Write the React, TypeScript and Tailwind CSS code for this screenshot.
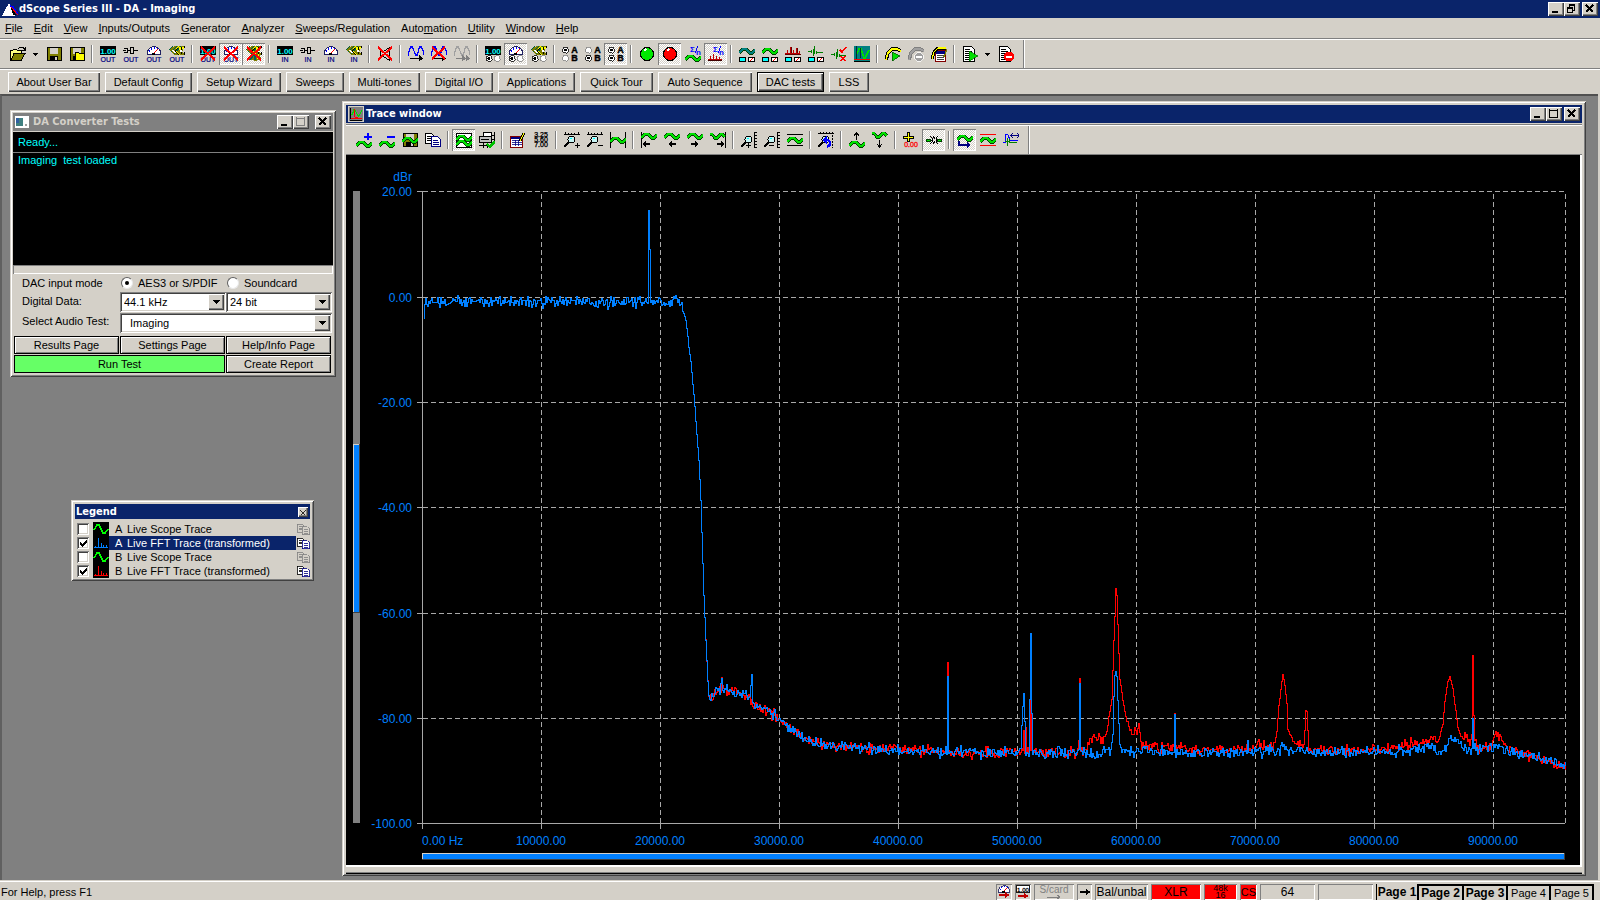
import { useState, type ReactNode } from "react";

const SANS = "font-['Liberation_Sans',Arial,sans-serif]";
const TITLE = "font-['DejaVu_Sans_Condensed','Noto_Sans',sans-serif]";

const RAISED =
  "bg-[#d4d0c8] shadow-[inset_1px_1px_#ffffff,inset_-1px_-1px_#404040,inset_-2px_-2px_#808080]";
const WINDOW =
  "bg-[#d4d0c8] shadow-[inset_1px_1px_#d4d0c8,inset_-1px_-1px_#404040,inset_2px_2px_#ffffff,inset_-2px_-2px_#808080]";
const FIELD =
  "bg-white shadow-[inset_1px_1px_#808080,inset_-1px_-1px_#ffffff,inset_2px_2px_#404040,inset_-2px_-2px_#d4d0c8]";
const SUNKEN = "shadow-[inset_1px_1px_#808080,inset_-1px_-1px_#ffffff]";

/* ---------- icon pieces, all drawn on a 16 x 16 grid ---------- */

function Icon({ children, className = "size-4" }: { children: ReactNode; className?: string }) {
  return (
    <svg viewBox="0 0 16 16" className={className} fill="none" shapeRendering="crispEdges" aria-hidden="true">
      {children}
    </svg>
  );
}

const Led = () => (
  <>
    <rect width="16" height="9" fill="#000" />
    <text x="8" y="8" textAnchor="middle" fontSize="8" fontWeight="bold" fill="#00ffff" fontFamily="Liberation Sans, sans-serif">1.00</text>
  </>
);
const Tag = ({ t }: { t: string }) => (
  <text x="8" y="16" textAnchor="middle" fontSize="7" fill="#000080" fontFamily="Liberation Sans, sans-serif" stroke="#000080" strokeWidth="0.2">{t}</text>
);
const Jack = () => (
  <>
    <path d="M1 2.500h4M1 6.500h4M0 4.500h3M4.500 2v5M11 4.500h4M5 4.500h2" stroke="#000" />
    <rect x="7.500" y="1.500" width="3" height="6" stroke="#000" fill="#d4d0c8" />
  </>
);
const Meter = () => (
  <>
    <path d="M1.500 8.500V5L4 2l2.500-1.500h3L12 2l2.500 3v3.500z" fill="#fff" stroke="#202060" />
    <path d="M3 5h1M5 3h1M8 2h1M11 3h1" stroke="#0000ff" strokeWidth="1.400" />
    <path d="M7 8l5-5" stroke="#ff0000" strokeWidth="1.300" />
    <path d="M6 8h3" stroke="#000" strokeWidth="2" />
  </>
);
const Fish = () => (
  <>
    <path d="M0 4l3-3 3-1h9v2h-2l1 2-1 2 2 1v2H6z" fill="#808000" />
    <path d="M0 4l4-4M2 6l6-6M5 8l7-8" stroke="#006040" strokeWidth="1.300" />
    <path d="M7 3l3-3M7 5l4 4M11 1v3M14 1v2" stroke="#ffff00" strokeWidth="1.300" />
    <path d="M12.500 1v7M9 2l-3 3 4 4M15 0v2M15 6v3" stroke="#000" />
    <path d="M3 4l4 3M11 5h2" stroke="#fff" strokeWidth="1.200" />
  </>
);
const Cross = ({ s = 14 }: { s?: number }) => (
  <path d={`M1 1l${s} ${s - 1}M${s + 1} 1L1 ${s}`} stroke="#ff0000" strokeWidth="2" />
);
const Dot = ({ x, y, on }: { x: number; y: number; on: boolean }) => (
  <>
    <circle cx={x} cy={y} r="3" fill="#fff" stroke={on ? "#000" : "#808080"} strokeWidth="0.8" />
    {on && <circle cx={x} cy={y} r="1.500" fill="#000" />}
  </>
);
const Radios = () => (
  <>
    <Dot x={4} y={12.5} on />
    <Dot x={12} y={12.5} on={false} />
  </>
);
const AB = ({ a, b }: { a: boolean; b: boolean }) => (
  <>
    <Dot x={3.5} y={4} on={a} />
    <Dot x={3.5} y={12} on={b} />
    <text x="12.500" y="7" textAnchor="middle" fontSize="9" fontWeight="bold" fill="#000" stroke="#000" strokeWidth="0.4" fontFamily="Liberation Sans, sans-serif">A</text>
    <text x="12.500" y="15" textAnchor="middle" fontSize="9" fontWeight="bold" fill="#000" stroke="#000" strokeWidth="0.4" fontFamily="Liberation Sans, sans-serif">B</text>
  </>
);
const Wave = ({ y = 8, c = "#00e000", flip = false }: { y?: number; c?: string; flip?: boolean }) => {
  const d = flip
    ? `M0 ${y - 3}h2l3 4h2l4-4h1l3 3`
    : `M0 ${y + 3}l4-4h3l4 4h2l3-3`;
  return (
    <>
      <path d={d} stroke="#004000" strokeWidth="3" />
      <path d={d} stroke={c} strokeWidth="1.600" />
    </>
  );
};
const Sine = ({ c }: { c: string }) => (
  <path d="M0.500 10V7l2-6h2l3 8h2l2-8h2l2 5v3" stroke={c} strokeWidth="1.200" />
);
const Arrow = ({ x, y, dir, c = "#000" }: { x: number; y: number; dir: 1 | -1; c?: string }) => (
  <path d={`M${x} ${y}h${7 * dir}m${-3 * dir} -2.500l${3 * dir} 2.500l${-3 * dir} 2.500`} stroke={c} strokeWidth="1.200" />
);
const Panels = () => (
  <>
    <rect x="0.500" y="11.500" width="6" height="4" fill="#00ffff" stroke="#000" />
    <rect x="9.500" y="11.500" width="6" height="4" fill="#fff" stroke="#000" />
    <path d="M11 15l3-3" stroke="#ff0000" />
  </>
);
const Bars = () => (
  <>
    <path d="M0 9V7h2V4h1v3h2V1h1v6h2V4h1v3h2V2h1v5h2V5h1v4z" fill="#c00000" />
    <path d="M0 8.500h16M6.500 1v6M12.500 2v5" stroke="#600000" />
  </>
);
const SigmaN = () => (
  <>
    <text x="5" y="6" fontSize="8" fontWeight="bold" fill="#0000ff" fontFamily="Liberation Sans, sans-serif">Σ</text>
    <text x="11" y="9" fontSize="8" fontWeight="bold" fill="#0000ff" fontFamily="Liberation Sans, sans-serif">n</text>
    <path d="M10 7l3-7" stroke="#0000ff" />
  </>
);
const Floppy = () => (
  <>
    <path d="M1 1.500h14v13H2l-1-1z" fill="#808000" stroke="#000" />
    <rect x="4" y="2" width="8" height="6" fill="#d4d0c8" />
    <rect x="4" y="10" width="8" height="5" fill="#000" />
    <rect x="9" y="11" width="2" height="3" fill="#d4d0c8" />
  </>
);
const Lens = () => (
  <>
    <circle cx="7.500" cy="7.500" r="3.500" fill="#c8f4f4" stroke="#000" />
    <path d="M5 10l-5 5" stroke="#000" strokeWidth="2" />
    <path d="M6 6h2" stroke="#00ffff" />
  </>
);
const TopRuler = () => <path d="M0 2.500h16M1.500 0v3M4.500 1v2M7.500 1v2M10.500 1v2M14.500 0v3" stroke="#000" />;
const SideRuler = () => <path d="M13.500 0v16M14 0.500h3M14 3.500h2M14 6.500h2M14 9.500h2M14 12.500h2M14 15.500h3" stroke="#000" />;
const Copy = ({ c = "#000", c2 = "#000080", f = "#fff" }: { c?: string; c2?: string; f?: string }) => (
  <>
    <path d="M0.500 1.500h6l2 2v8h-8z" fill={f} stroke={c} />
    <path d="M2 4.500h4M2 6.500h4M2 8.500h4" stroke={c} />
    <path d="M6.500 4.500h6l3 3v7h-9z" fill={f} stroke={c2} />
    <path d="M8 8.500h5M8 10.500h6M8 12.500h6" stroke={c2} />
  </>
);
const Page = () => (
  <>
    <path d="M1.500 0.500h8l3 3v12h-11z" fill="#fff" stroke="#000" />
    <path d="M3 3.500h5M3 5.500h7M3 7.500h7M3 9.500h7M3 11.500h7M3 13.500h6" stroke="#000" />
  </>
);
const Curve = ({ c = "#ffff00", d = "#000" }: { c?: string; d?: string }) => (
  <>
    <path d="M1 14l2-7 4-4h5l4 2" stroke={d} strokeWidth="3.500" />
    <path d="M1 14l2-7 4-4h5l4 2" stroke={c} strokeWidth="1.500" />
  </>
);
const Impulse = () => <path d="M0 5.500h3M3.500 4v3M5.500 3v7M6.500 0v8M8.500 5v3M9 6.500h6" stroke="#008000" />;

/* ---------- toolbar ---------- */

type Tool = { n: string; i: ReactNode; on?: boolean } | "sep" | "drop";

function Toolbar({ tools, label }: { tools: Tool[]; label: string }) {
  return (
    <div role="toolbar" aria-label={label} className="flex h-7 items-stretch">
      <div className="flex items-center border-r border-[#808080] pr-1.5 pl-1.5 shadow-[1px_0_#ffffff]">
        {tools.map((t, k) =>
          t === "sep" ? (
            <span key={k} className="mx-[3px] h-[18px] w-0.5 border-r border-l border-r-white border-l-[#808080]" />
          ) : t === "drop" ? (
            <button key={k} aria-label="More options" className="flex h-[22px] w-[13px] items-center justify-center">
              <svg viewBox="0 0 5 3" className="h-[3px] w-[5px]" shapeRendering="crispEdges" aria-hidden="true">
                <path d="M0 0h5L2.500 3z" />
              </svg>
            </button>
          ) : (
            <button
              key={k}
              title={t.n}
              aria-label={t.n}
              aria-pressed={!!t.on}
              className={
                t.on
                  ? `flex h-[22px] w-[23px] items-center justify-center bg-[repeating-conic-gradient(#ffffff_0_25%,#d4d0c8_0_50%)] bg-[length:2px_2px] ${SUNKEN}`
                  : "flex h-[22px] w-[23px] items-center justify-center"
              }
            >
              <Icon>{t.i}</Icon>
            </button>
          ),
        )}
      </div>
    </div>
  );
}

const MAIN_TOOLS: Tool[] = [
  {
    n: "Open",
    i: (
      <>
        <path d="M0.500 14V4.500h2l1-1h3l1 1h4V7" fill="#ffff80" stroke="#000" />
        <path d="M1 14.500l3-7h11l-4 7z" fill="#808000" stroke="#000" />
        <path d="M8 2.500l2-1h3l2 2M12 4h3V1" stroke="#000" />
      </>
    ),
  },
  "drop",
  { n: "Save", i: <Floppy /> },
  {
    n: "Save as",
    i: (
      <>
        <Floppy />
        <path d="M6.500 14.500v-8h3l1 1h5v7z" fill="#ffff00" stroke="#000" />
      </>
    ),
  },
  "sep",
  { n: "Digital output", i: <><Led /><Tag t="OUT" /></> },
  { n: "Analogue output", i: <><Jack /><Tag t="OUT" /></> },
  { n: "Output meter", i: <><Meter /><Tag t="OUT" /></> },
  { n: "Output carrier", i: <><Fish /><Tag t="OUT" /></> },
  "sep",
  { n: "Mute digital output", i: <><Led /><Tag t="OUT" /><Cross /></> },
  { n: "Mute analogue output", i: <><Meter /><Tag t="OUT" /><Cross /></>, on: true },
  { n: "Mute carrier", i: <><Fish /><path d="M1 13l4-5h9l1 5-5 2z" fill="#808000" /><path d="M4 14l4-6M9 14V8" stroke="#006060" strokeWidth="1.500" /><path d="M11 13l2-5" stroke="#ffff00" /><Cross /></>, on: true },
  "sep",
  { n: "Digital input", i: <><Led /><Tag t="IN" /></> },
  { n: "Analogue input", i: <><Jack /><Tag t="IN" /></> },
  { n: "Input meter", i: <><Meter /><Tag t="IN" /></> },
  { n: "Input carrier", i: <><Fish /><Tag t="IN" /></> },
  "sep",
  { n: "Mute speaker", i: <><path d="M3.500 5.500h3l6-4v13l-6-4h-3z" fill="#d4d0c8" stroke="#000" /><Cross /></> },
  "sep",
  { n: "Generator", i: <><Sine c="#0000ff" /><path d="M2 12.500h10" stroke="#000" strokeWidth="1.500" /><path d="M11 9l4 3.500-4 3z" fill="#000" /></> },
  { n: "Generator off", i: <><Sine c="#0000ff" /><path d="M2 12.500h10" stroke="#000" strokeWidth="1.500" /><path d="M11 9l4 3.500-4 3z" fill="#000" /><Cross s={13} /></> },
  { n: "Generator restart", i: <><Sine c="#a0a0a0" /><path d="M2 12.500h10" stroke="#808080" strokeWidth="1.500" /><path d="M8 9l4 3.500-4 3zM12 9l4 3.500-4 3z" fill="#808080" /></> },
  "sep",
  { n: "Reading source", i: <><Led /><Radios /></> },
  { n: "Meter source", i: <><Meter /><Radios /></>, on: true },
  { n: "Carrier source", i: <><Fish /><Radios /></> },
  "sep",
  { n: "Channel A", i: <AB a b={false} /> },
  { n: "Channel B", i: <AB a={false} b /> },
  { n: "Channels A and B", i: <AB a b />, on: true },
  "sep",
  { n: "Run", i: <><circle cx="8" cy="8" r="6.500" fill="#00e800" stroke="#000" /><path d="M5 5l2-2" stroke="#fff" strokeWidth="1.500" /></> },
  { n: "Stop", i: <><circle cx="8" cy="8" r="6.500" fill="#ff0000" stroke="#000" /><path d="M5 5l2-2" stroke="#fff" strokeWidth="1.500" /></>, on: true },
  { n: "Averaged scope", i: <><SigmaN /><Wave y={11} /></> },
  { n: "Averaged spectrum", i: <><SigmaN /><path d="M0 15v-2h2v-3h1v3h2V8h1v5h2v-3h1v3h2v-2h1v2h2v2z" fill="#c00000" /><path d="M0 14.500h14" stroke="#400000" /></>, on: true },
  "sep",
  { n: "Scope A", i: <><Wave y={4} c="#008080" /><Panels /></> },
  { n: "Scope B", i: <><Wave y={4} /><Panels /></> },
  { n: "Spectrum", i: <><Bars /><Panels /></> },
  { n: "Impulse", i: <><Impulse /><Panels /></> },
  { n: "Trace test", i: <><g transform="translate(0 3)"><Impulse /></g><path d="M9 4l2 2 4-5M10 10l4 5M14 10l-4 5" stroke="#ff0000" strokeWidth="1.500" /></> },
  { n: "Trace window", i: <><rect width="16" height="16" fill="#008080" /><path d="M3 8l2-5h2l3 9h1l4-8" stroke="#00e000" strokeWidth="1.500" /><path d="M2.500 0v14M6.500 2v10" stroke="#003030" /><path d="M0 13.500h16" stroke="#ff0000" /><path d="M0 15.500h16" stroke="#000" /></> },
  "sep",
  { n: "Sweep", i: <><Curve /><path d="M7 6l8 4-8 5z" fill="#00e000" stroke="#006000" strokeWidth="0.800" /></> },
  { n: "Stop sweep", i: <><Curve c="#a0a0a0" d="#808080" /><circle cx="11" cy="11" r="4.500" fill="#a0a0a0" stroke="#fff" strokeWidth="0.800" /><path d="M8 11h6" stroke="#fff" strokeWidth="1.500" /></> },
  { n: "Sweep settings", i: <><rect x="4.500" y="4.500" width="10" height="11" fill="#fff" stroke="#800000" /><path d="M5 6h9" stroke="#000080" strokeWidth="3" /><path d="M6 9.500h7M6 11.500h7M6 13.500h7" stroke="#404040" /><path d="M1 13l2-7 4-4h8" stroke="#000" strokeWidth="3" /><path d="M1 13l2-7 4-4h8" stroke="#ffff00" strokeWidth="1.200" /><path d="M13 11l3-8" stroke="#808000" strokeWidth="1.500" /></> },
  "sep",
  { n: "Run script", i: <><Page /><path d="M7 5l9 5-9 5z" fill="#00e000" stroke="#008000" strokeWidth="0.800" /></> },
  "drop",
  { n: "Stop script", i: <><Page /><circle cx="11" cy="10.500" r="5" fill="#ff0000" /><path d="M8 10.500h6" stroke="#fff" strokeWidth="2" /></> },
];

const TRACE_TOOLS: Tool[] = [
  { n: "Add trace", i: <><Wave y={11} /><path d="M8 4.500h8M12 1v7" stroke="#0000ff" strokeWidth="2" /></> },
  { n: "Remove trace", i: <><Wave y={11} /><path d="M8 4.500h8" stroke="#0000ff" strokeWidth="2" /></> },
  { n: "Save trace", i: <><Floppy /><Wave y={7} /></> },
  { n: "Copy", i: <Copy /> },
  "sep",
  { n: "Show traces", i: <><rect x="0.500" y="1.500" width="15" height="14" fill="#fff" stroke="#000" /><Wave y={5} /><Wave y={10} /></>, on: true },
  { n: "Print", i: <><rect x="4.500" y="0.500" width="8" height="4" fill="#fff" stroke="#000" /><rect x="0.500" y="4.500" width="12" height="6" fill="#c0c0c0" stroke="#000" /><path d="M2 7.500h8M0 13.500h8M4.500 11v5M8.500 11v5M15.500 0v10M13 3.500h3M13 7.500h3" stroke="#000" /><path d="M8 12l3 3 5-6" stroke="#00c000" strokeWidth="2.500" /></> },
  "sep",
  { n: "Edit trace data", i: <><rect x="0.500" y="4.500" width="12" height="11" fill="#fff" stroke="#800000" /><path d="M1 6h11" stroke="#000080" strokeWidth="2" /><path d="M2 8.500h10M2 10.500h10M2 12.500h10M5.500 8v6M8.500 8v6" stroke="#000080" strokeWidth="0.800" /><path d="M10 9l4-8" stroke="#000" strokeWidth="3" /><path d="M10 9l4-8" stroke="#ffff00" strokeWidth="1.200" /></> },
  { n: "Readings", i: <g fontFamily="Liberation Sans, sans-serif" fontSize="7" fill="#000" stroke="#000" strokeWidth="0.300" textAnchor="middle"><text x="8" y="5">3.25</text><text x="8" y="10">5.60</text><text x="8" y="15">7.00</text></g> },
  "sep",
  { n: "Zoom in horizontally", i: <><TopRuler /><Lens /><path d="M11 13.500h5M13.500 11v5" stroke="#000" /></> },
  { n: "Zoom out horizontally", i: <><TopRuler /><Lens /><path d="M11 13.500h5" stroke="#000" /></> },
  { n: "Fit horizontally", i: <><path d="M0.500 0v16M15.500 0v16" stroke="#000" /><Wave y={7} /></> },
  "sep",
  { n: "Scroll to start", i: <><path d="M0.500 0v16" stroke="#000" /><Wave y={3} /><Arrow x={9} y={12} dir={-1} /></> },
  { n: "Scroll left", i: <><Wave y={3} /><Arrow x={12} y={12} dir={-1} /></> },
  { n: "Scroll right", i: <><Wave y={3} /><Arrow x={4} y={12} dir={1} /></> },
  { n: "Scroll to end", i: <><path d="M15.500 0v16" stroke="#000" /><Wave y={5} flip /><Arrow x={7} y={12} dir={1} /></> },
  "sep",
  { n: "Zoom in vertically", i: <><SideRuler /><Lens /><path d="M5 13.500h5M7.500 11v5" stroke="#000" /></> },
  { n: "Zoom out vertically", i: <><SideRuler /><Lens /><path d="M5 13.500h5" stroke="#000" /></> },
  { n: "Fit vertically", i: <><path d="M0 2.500h16M0 13.500h16" stroke="#000" /><Wave y={7} /></> },
  "sep",
  { n: "Undo zoom", i: <><path d="M0 1.500h16M14.500 0v16M2.500 0v2M5.500 0v2M8.500 0v2M11.500 0v2" stroke="#000" strokeDasharray="2 1" /><Lens /><path d="M6 8h4l2 2v3l-3 2" stroke="#0000ff" strokeWidth="2.500" /><path d="M4 8l5-4v8z" fill="#0000ff" /></> },
  "sep",
  { n: "Move trace up", i: <><Wave y={11} /><path d="M7.500 8V1M5 3.500L7.500 1 10 3.500" stroke="#000" /></> },
  { n: "Move trace down", i: <><Wave y={4} flip /><path d="M7.500 8v7M5 12l2.500 3L10 12" stroke="#000" /></> },
  "sep",
  { n: "Cursor", i: <><path d="M5.500 0v10M0 5.500h11" stroke="#000" strokeWidth="3" /><path d="M5.500 1v8M1 5.500h9" stroke="#ffff00" /><text x="8" y="15" textAnchor="middle" fontSize="7" fill="#ff0000" stroke="#ff0000" strokeWidth="0.300" fontFamily="Liberation Sans, sans-serif">0.00</text></> },
  { n: "Track cursors", i: <><path d="M0 8h5M11 8h5" stroke="#004000" strokeWidth="3" /><path d="M1 8h3M12 8h3" stroke="#00e000" /><path d="M4.500 8h2M9.500 8h2M4 4l2 2v4l-2 2M12 4l-2 2v4l2 2M7 4l2 3M9 9l-2 3" stroke="#000" /></>, on: true },
  "sep",
  { n: "Move trace", i: <><Wave y={5} /><path d="M2 9v4h9" stroke="#000080" strokeWidth="2" /><path d="M10 10l4 3-4 3z" fill="#000080" /></>, on: true },
  { n: "Limits", i: <><path d="M0 2.500h16M0 13.500h16" stroke="#ff0000" /><Wave y={7} /></> },
  { n: "Window function", i: <><path d="M2.500 2v8M3 2.500h2M5.500 3v3M6.500 5v4M7 8.500h8M0 10.500h3" stroke="#0000ff" strokeWidth="1.400" /><path d="M2 9.500h4M4.500 6v8M6.500 7v4M7 10.500h7" stroke="#008000" /><path d="M8 3.500h8M10 1L8 3.500 10 6M14 1l2 2.500L14 6" stroke="#000080" /></> },
];

/* ---------- window chrome ---------- */

type Caption = "Minimize" | "Maximize" | "Restore" | "Close";

function CaptionButton({ kind, dim = false }: { kind: Caption; dim?: boolean }) {
  const c = dim ? "#808080" : "#000";
  return (
    <button aria-label={kind} className={`flex h-3.5 w-4 items-center justify-center ${RAISED}`}>
      <svg viewBox="0 0 12 10" className="h-2.5 w-3" fill="none" stroke={c} shapeRendering="crispEdges" aria-hidden="true">
        {kind === "Minimize" && <path d="M2 8h6" strokeWidth="2" />}
        {kind === "Maximize" && <path d="M1.500 1h8M1.500 0v8.500h8V0" strokeWidth="1" />}
        {kind === "Restore" && <path d="M3.500 3V0.500h5V6H7M3 1h6M1.500 3.500h5v5h-5zM1 4h6" />}
        {kind === "Close" && <path d="M2 1l7 7M9 1L2 8" strokeWidth="1.800" />}
      </svg>
    </button>
  );
}

function TraceLogo() {
  return (
    <Icon className="size-4">
      <rect x="0.500" y="0.500" width="15" height="15" fill="#808080" stroke="#d4d0c8" />
      <path d="M2.500 2v11M2 14.500h12" stroke="#000" />
      <path d="M4 9l2-5h1l3 6h1l3-6" stroke="#00e000" strokeWidth="1.300" />
      <path d="M6 3l1 8h3M3 12.500h11" stroke="#ff0000" />
    </Icon>
  );
}

/* ---------- chart ---------- */

const X0 = 76;
const X1 = 1219;
const GRID_X = [195, 314, 433, 552, 671, 790, 909, 1028, 1147];
const ROWS = [
  { y: 36, t: "20.00" },
  { y: 142, t: "0.00" },
  { y: 247, t: "-20.00" },
  { y: 352, t: "-40.00" },
  { y: 458, t: "-60.00" },
  { y: 563, t: "-80.00" },
  { y: 668, t: "-100.00" },
];

type P = [number, number];

const SHARED: P[] = [
  [77, 146], [300, 147], [322, 147], [328, 143], [333, 148], [336, 154], [339, 166], [341, 180], [342, 192],
  [344, 206], [346, 228], [348, 250], [350, 280], [352, 305], [354, 345], [357, 440], [359, 485], [361, 525], [362, 541],
  [366, 541], [371, 535], [376, 532], [383, 536], [392, 537], [402, 542], [409, 551], [424, 556], [432, 564],
  [444, 573], [456, 582], [470, 588], [485, 590], [515, 592], [560, 595], [600, 597],
];
const BLUE: P[] = [
  ...SHARED, [764, 597], [766, 579], [767, 542], [768, 520], [769, 516], [770, 521], [771, 545], [772, 568],
  [773, 588], [775, 596], [900, 597], [930, 596], [936, 589], [940, 596], [1000, 597], [1060, 596], [1083, 591],
  [1095, 597], [1103, 585], [1111, 586], [1116, 593], [1148, 593], [1165, 595], [1185, 601], [1200, 606], [1219, 611],
];
const RED: P[] = [
  ...SHARED, [720, 597], [739, 594], [745, 586], [751, 580], [755, 588], [760, 578], [762, 562], [765, 545],
  [766, 515], [767, 485], [768, 461], [769, 434], [770, 440], [771, 470], [772, 498], [773, 524], [776, 544],
  [780, 567], [786, 577], [790, 577], [792, 569], [794, 586], [799, 592], [830, 592], [850, 594], [895, 595],
  [911, 588], [920, 592], [927, 592], [930, 576], [932, 550], [934, 534], [936, 519], [938, 530], [940, 548],
  [941, 574], [946, 585], [957, 592], [958, 575], [959, 555], [960, 556], [961, 575], [962, 595], [980, 596],
  [1040, 594], [1072, 587], [1076, 584], [1092, 584], [1096, 568], [1098, 546], [1101, 526], [1103, 521],
  [1106, 533], [1109, 556], [1111, 572], [1117, 583], [1128, 586], [1132, 592], [1144, 592], [1149, 576],
  [1155, 584], [1160, 592], [1180, 598], [1195, 605], [1219, 611],
];
const BLUE_SPIKES: Record<number, number> = {
  77: 163, 302: 55, 303: 94, 304: 147, 375: 523, 404: 530, 405: 519, 601: 521, 675: 570, 676: 551, 677: 538, 678: 566,
  683: 544, 684: 478, 685: 558, 733: 528, 828: 559, 901: 585, 1126: 563,
};
const RED_SPIKES: Record<number, number> = {
  375: 522, 601: 507, 677: 575, 679: 572, 684: 544, 732: 585, 733: 523, 828: 558, 1126: 500, 1127: 560,
};

function buildTrace(points: P[], spikes: Record<number, number>, seed: number, from: number) {
  let s = seed;
  const rnd = () => {
    s = (s * 16807) % 2147483647;
    return s / 2147483647;
  };
  let d = "";
  let k = 0;
  for (let x = from; x <= X1; x++) {
    while (k < points.length - 2 && points[k + 1][0] < x) k++;
    const [ax, ay] = points[k];
    const [bx, by] = points[k + 1];
    const base = ay + ((by - ay) * (x - ax)) / (bx - ax);
    const steep = Math.abs((by - ay) / (bx - ax)) > 2;
    const noise = (rnd() + rnd() + rnd() - 1.5) * (steep ? 1 : 5.5);
    const y = spikes[x] ?? Math.round(base + noise);
    d += d === "" ? `M${x}.5 ${y}.5` : `H${x}.5V${y}.5`;
  }
  return d;
}

const BLUE_PATH = buildTrace(BLUE, BLUE_SPIKES, 4711, 77);
const RED_PATH = buildTrace(RED, RED_SPIKES, 90210, 359);

function Chart() {
  return (
    <svg
      viewBox="0 0 1234 710"
      preserveAspectRatio="xMinYMin meet"
      className="block h-full w-full bg-black"
      role="img"
      aria-label="FFT traces, level in dBr against frequency in Hz"
      shapeRendering="crispEdges"
    >
      <rect x="7" y="36" width="7" height="632" fill="#808080" />
      <rect x="7" y="289" width="7" height="169" fill="#404040" />
      <rect x="7" y="289" width="6" height="168" fill="#d4d0c8" />
      <rect x="8" y="290" width="5" height="167" fill="#0080ff" />

      <g stroke="#a8a8a8" fill="none">
        {ROWS.map((r, i) => (
          <g key={r.t}>
            <path d={`M${X0 - 5} ${r.y}.5h5`} />
            {i < 6 && <path d={`M${X0 + 1} ${r.y}.5H${X1}`} strokeDasharray="5 3" />}
          </g>
        ))}
        {[...GRID_X, X1].map((x) => (
          <path key={x} d={`M${x}.5 39V668`} strokeDasharray="5 3" />
        ))}
        {[X0, ...GRID_X].map((x) => (
          <path key={x} d={`M${x}.5 668v6`} />
        ))}
        <path d={`M${X0}.5 36V668.5H${X1}`} />
      </g>

      <path d={RED_PATH} stroke="#ff0000" fill="none" />
      <path d={BLUE_PATH} stroke="#0080ff" fill="none" />

      <g fill="#0080ff" fontSize="12" fontFamily="Liberation Sans, Arial, sans-serif">
        <text x="66" y="26" textAnchor="end">dBr</text>
        {ROWS.map((r) => (
          <text key={r.t} x="66" y={r.y + 5} textAnchor="end">{r.t}</text>
        ))}
        <text x="76" y="690">0.00 Hz</text>
        {GRID_X.map((x, i) => (
          <text key={x} x={x} y="690" textAnchor="middle">{`${i + 1}0000.00`}</text>
        ))}
      </g>

      <rect x="76" y="698" width="1143" height="7" fill="#404040" />
      <rect x="76" y="698" width="1142" height="6" fill="#d4d0c8" />
      <rect x="77" y="699" width="1141" height="5" fill="#0080ff" />
    </svg>
  );
}

/* ---------- DA converter tests ---------- */

function Combo({ label, value, options, indent = false }: { label: string; value: string; options: string[]; indent?: boolean }) {
  return (
    <div className={`relative h-5 flex-1 ${FIELD}`}>
      <select
        aria-label={label}
        defaultValue={value}
        className={`block h-full w-full appearance-none bg-transparent text-[11px] leading-5 outline-none ${indent ? "pl-2.5" : "pl-1"}`}
      >
        {options.map((o) => (
          <option key={o}>{o}</option>
        ))}
      </select>
      <span className={`pointer-events-none absolute inset-y-0.5 right-0.5 flex w-4 items-center justify-center ${RAISED}`}>
        <svg viewBox="0 0 7 4" className="h-1 w-[7px]" shapeRendering="crispEdges" aria-hidden="true">
          <path d="M0 0h7L3.500 4z" />
        </svg>
      </span>
    </div>
  );
}

function PanelButton({ children, wide = false }: { children: ReactNode; wide?: boolean }) {
  return (
    <button
      className={
        wide
          ? "col-span-2 h-[18px] border border-black bg-[#66ff66] leading-4"
          : "h-[18px] border border-black bg-[#d4d0c8] leading-4 shadow-[inset_1px_1px_#ffffff,inset_-1px_-1px_#808080]"
      }
    >
      {children}
    </button>
  );
}

function ConverterTests() {
  const [mode, setMode] = useState("aes");
  const radio =
    "flex size-3 appearance-none items-center justify-center rounded-full border border-t-[#606060] border-l-[#606060] border-r-[#e8e8e8] border-b-[#e8e8e8] bg-white checked:after:size-1 checked:after:rounded-full checked:after:bg-black";
  return (
    <section className={`absolute top-3.5 left-2 w-[326px] p-[3px] text-[11px] ${WINDOW}`}>
      <header className={`flex h-[18px] items-center gap-1 bg-[#808080] pr-0.5 pl-0.5 ${TITLE}`}>
        <Icon className="size-3.5">
          <rect width="16" height="14" y="1" fill="#fff" />
          <rect x="1" y="3" width="8" height="10" fill="#408080" />
          <rect x="1" y="3" width="4" height="6" fill="#3060a0" />
          <rect x="11" y="10" width="3" height="3" fill="#a0a0a0" />
        </Icon>
        <h2 className="flex-1 font-bold text-[#d4d0c8]">DA Converter Tests</h2>
        <div className="mr-0.5 flex">
          <CaptionButton kind="Minimize" />
          <CaptionButton kind="Maximize" dim />
        </div>
        <CaptionButton kind="Close" />
      </header>
      <div className="mt-px h-[133px] bg-black text-[#00ffff]">
        <p className="h-[21px] border-b border-[#808080] pl-[5px] leading-5">Ready...</p>
        <p className="pl-[5px] leading-[14px] whitespace-pre">Imaging  test loaded</p>
      </div>
      <div className={`h-[9px] ${SUNKEN}`} />
      <div className="grid grid-cols-[106px_1fr] items-center pr-px pl-px">
        <span className="pl-2 leading-[18px]">DAC input mode</span>
        <div className="flex h-[18px] items-center pl-px">
          <label className="flex w-[106px] items-center gap-[5px]">
            <input type="radio" name="mode" className={radio} checked={mode === "aes"} onChange={() => setMode("aes")} />
            AES3 or S/PDIF
          </label>
          <label className="flex items-center gap-[5px]">
            <input type="radio" name="mode" className={radio} checked={mode === "card"} onChange={() => setMode("card")} />
            Soundcard
          </label>
        </div>
        <span className="pb-0.5 pl-2">Digital Data:</span>
        <div className="flex">
          <Combo label="Sample rate" value="44.1 kHz" options={["44.1 kHz", "48 kHz", "96 kHz"]} />
          <Combo label="Word length" value="24 bit" options={["16 bit", "24 bit"]} />
        </div>
        <span className="pb-0.5 pl-2">Select Audio Test:</span>
        <div className="flex pt-px">
          <Combo label="Select Audio Test" value="Imaging" options={["Imaging", "Jitter", "Linearity"]} indent />
        </div>
      </div>
      <div className="mt-[3px] mr-0.5 mb-px ml-px grid grid-cols-3 gap-px">
        <PanelButton>Results Page</PanelButton>
        <PanelButton>Settings Page</PanelButton>
        <PanelButton>Help/Info Page</PanelButton>
        <PanelButton wide>Run Test</PanelButton>
        <PanelButton>Create Report</PanelButton>
      </div>
    </section>
  );
}

/* ---------- legend ---------- */

const TRACES = [
  { ch: "A", name: "Live Scope Trace", fft: false, color: "#00ff00" },
  { ch: "A", name: "Live FFT Trace (transformed)", fft: true, color: "#0080ff" },
  { ch: "B", name: "Live Scope Trace", fft: false, color: "#00ff00" },
  { ch: "B", name: "Live FFT Trace (transformed)", fft: true, color: "#ff0000" },
];

function Legend() {
  return (
    <section className={`absolute top-[404px] left-[69px] w-[243px] p-1 pb-[3px] text-[11px] ${WINDOW}`}>
      <header className={`mb-[3px] flex h-[15px] items-center justify-between bg-[#0a246a] pr-0.5 pl-px ${TITLE}`}>
        <h2 className="text-[11px] leading-[15px] font-bold text-white">Legend</h2>
        <button aria-label="Close legend" className={`flex size-[10px] items-center justify-center ${RAISED}`}>
          <svg viewBox="0 0 6 6" className="size-1.5" stroke="#000" shapeRendering="crispEdges" aria-hidden="true">
            <path d="M0.500 0.500l5 5M5.500 0.500l-5 5" strokeWidth="0.800" />
          </svg>
        </button>
      </header>
      <ul>
        {TRACES.map((t, i) => (
          <li key={i} className="flex h-3.5 items-center pl-0.5">
            <label className="flex h-3.5 flex-1 items-center">
              <span className="grid size-3 place-items-center">
                <input
                  type="checkbox"
                  defaultChecked={t.fft}
                  className={`peer col-start-1 row-start-1 size-3 appearance-none ${FIELD}`}
                />
                <svg
                  viewBox="0 0 7 7"
                  className="pointer-events-none invisible relative col-start-1 row-start-1 size-[7px] peer-checked:visible"
                  shapeRendering="crispEdges"
                  aria-hidden="true"
                >
                  <path d="M0 2v3l2 2 5-5V0L2 4z" fill="#000" />
                </svg>
              </span>
              <svg viewBox="0 0 16 14" className="ml-1 h-3.5 w-4" fill="none" shapeRendering="crispEdges" aria-hidden="true">
                <rect width="16" height="14" fill="#000" />
                {t.fft ? (
                  <path d="M1 11.500h14M2.500 12v-2M5.500 12V2M8.500 12V7M10.500 12V9M13.500 12V9" stroke={t.color} />
                ) : (
                  <path d="M1 8l3-5h2l4 8h2l3-4" stroke={t.color} strokeWidth="1.500" />
                )}
              </svg>
              <span className={`flex h-3.5 flex-1 items-center gap-[5px] pl-1.5 leading-3.5 ${i === 1 ? "bg-[#0a246a] text-white" : ""}`}>
                <span className="w-[7px]">{t.ch}</span>
                <span>{t.name}</span>
              </span>
            </label>
            <button aria-label={`Copy ${t.ch} ${t.name}`} className="ml-px">
              <Icon className="size-[13px]">
                <Copy c={t.fft ? "#000" : "#808080"} c2={t.fft ? "#000080" : "#808080"} f={t.fft ? "#fff" : "#d4d0c8"} />
              </Icon>
            </button>
          </li>
        ))}
      </ul>
    </section>
  );
}

/* ---------- page ---------- */

const MENUS = [
  ["", "F", "ile"], ["", "E", "dit"], ["", "V", "iew"], ["", "I", "nputs/Outputs"], ["", "G", "enerator"],
  ["", "A", "nalyzer"], ["", "S", "weeps/Regulation"], ["Auto", "m", "ation"], ["", "U", "tility"], ["", "W", "indow"], ["", "H", "elp"],
];

const USER_BAR: { t: string; w: string }[] = [
  { t: "About User Bar", w: "w-[92px]" },
  { t: "Default Config", w: "w-[87px]" },
  { t: "Setup Wizard", w: "w-[84px]" },
  { t: "Sweeps", w: "w-[58px]" },
  { t: "Multi-tones", w: "w-[71px]" },
  { t: "Digital I/O", w: "w-[68px]" },
  { t: "Applications", w: "w-[77px]" },
  { t: "Quick Tour", w: "w-[73px]" },
  { t: "Auto Sequence", w: "w-[94px]" },
  { t: "DAC tests", w: "w-[67px]" },
  { t: "LSS", w: "w-10" },
];

function StatusBar() {
  const cell = `flex h-4 items-center justify-center overflow-hidden whitespace-nowrap ${SUNKEN}`;
  const tab = "h-4 border-t-2 border-r-2 border-black text-center leading-[13px] whitespace-nowrap";
  return (
    <footer className="flex h-5 items-end border-t border-[#d4d0c8] pr-1.5 text-xs shadow-[inset_0_1px_#ffffff]">
      <p className="flex-1 pl-px text-[11px] leading-4">For Help, press F1</p>
      <div className="flex gap-[3px]">
        <span className={`${cell} w-4`}><Icon className="size-3.5"><Meter /><path d="M2 11.500h9M9 9l4 2.500L9 14" stroke="#c00000" strokeWidth="1.500" /></Icon></span>
        <span className={`${cell} w-4`}><Icon className="size-3.5"><rect x="1" y="1" width="14" height="8" fill="#fff" stroke="#000" /><text x="8" y="8" textAnchor="middle" fontSize="7" fill="#000" stroke="#000" strokeWidth="0.300" fontFamily="Liberation Sans, sans-serif">1.00</text><path d="M2 12.500h9M9 10l4 2.500L9 15" stroke="#c00000" strokeWidth="1.500" /></Icon></span>
        <span className={`${cell} w-10 flex-col text-[10px] leading-[10px] text-[#808080]`}>
          S/card
          <svg viewBox="0 0 14 4" className="h-1 w-3.5" fill="none" stroke="#808080" shapeRendering="crispEdges" aria-hidden="true"><path d="M0 2h12M10 0l3 2-3 2" /></svg>
        </span>
        <span className={`${cell} w-[15px]`}><Icon className="size-3"><path d="M1 8h10" stroke="#000" strokeWidth="2.500" /><path d="M9 3l6 5-6 5z" fill="#000" /></Icon></span>
        <span className={`${cell} w-[53px]`}>Bal/unbal</span>
        <span className={`${cell} w-[50px] bg-[#ff0000]`}>XLR</span>
        <span className={`${cell} w-[33px] flex-col bg-[#ff0000] text-[9px] leading-[7px]`}><span>48k</span><span>16</span></span>
        <span className={`${cell} w-[17px] bg-[#ff0000] text-[11px]`}>CS</span>
        <span className={`${cell} w-[55px]`}>64</span>
        <span className={`${cell} w-[55px]`} />
      </div>
      <nav aria-label="Pages" className="ml-[3px] flex items-end">
        <button className="h-4 w-[43px] border-r-2 border-l border-black text-xs leading-[15px] font-bold whitespace-nowrap">Page 1</button>
        <button className={`${tab} w-[45px] text-xs font-bold`}>Page 2</button>
        <button className={`${tab} w-[44px] text-xs font-bold`}>Page 3</button>
        <button className={`${tab} w-[43px] text-[11px]`}>Page 4</button>
        <button className={`${tab} w-[43px] text-[11px]`}>Page 5</button>
      </nav>
    </footer>
  );
}

export default function App() {
  return (
    <div className={`flex min-h-screen flex-col bg-[#d4d0c8] text-[11px] text-black ${SANS}`}>
      <header className={`flex h-[18px] items-center bg-[#0a246a] pr-0.5 pl-0.5 ${TITLE}`}>
        <Icon className="size-4">
          <path d="M7 3L1 14h11z" fill="#fff" stroke="#fff" />
          <path d="M8 4l3 3 3 7h-3z" fill="#000" />
          <path d="M8 5l3 1 5 7" stroke="#0000ff" strokeWidth="1.500" />
          <path d="M9 6l7 8" stroke="#ff0000" />
        </Icon>
        <h1 className="ml-px flex-1 text-[11px] font-bold text-white">dScope Series III - DA - Imaging</h1>
        <div className="mr-0.5 flex">
          <CaptionButton kind="Minimize" />
          <CaptionButton kind="Restore" />
        </div>
        <CaptionButton kind="Close" />
      </header>

      <nav aria-label="Menu" className="flex h-5 items-center gap-[11px] pl-[5px]">
        {MENUS.map(([a, u, b]) => (
          <button key={u + b}>
            {a}
            <u>{u}</u>
            {b}
          </button>
        ))}
      </nav>

      <div className="border-t border-[#808080]">
        <div className="border-t border-white">
          <Toolbar label="Main" tools={MAIN_TOOLS} />
        </div>
      </div>

      <div className="flex h-[26px] items-center gap-[5px] border-t border-[#808080] pl-2 shadow-[inset_0_1px_#ffffff]">
        {USER_BAR.map((b) => (
          <button
            key={b.t}
            className={
              b.t === "DAC tests"
                ? `h-5 border border-black leading-[18px] ${b.w} ${RAISED}`
                : `h-5 leading-5 ${b.w} ${RAISED}`
            }
          >
            {b.t}
          </button>
        ))}
      </div>

      <main className="relative mr-0.5 min-h-[784px] flex-1 border-t-2 border-l-2 border-t-[#505050] border-l-[#606060] bg-[#808080]">
        <ConverterTests />
        <Legend />
        <section className={`absolute top-[5px] right-3 bottom-1 left-[340px] flex flex-col p-1 pb-0.5 ${WINDOW}`}>
          <header className={`flex h-[18px] shrink-0 items-center bg-[#0a246a] pr-0.5 pl-0.5 ${TITLE}`}>
            <TraceLogo />
            <h2 className="ml-0.5 flex-1 text-[11px] font-bold text-white">Trace window</h2>
            <div className="mr-0.5 flex">
              <CaptionButton kind="Minimize" />
              <CaptionButton kind="Maximize" />
            </div>
            <CaptionButton kind="Close" />
          </header>
          <div className="mt-px shrink-0 border-t border-b border-[#808080] pt-px shadow-[inset_0_1px_#ffffff]">
            <Toolbar label="Trace" tools={TRACE_TOOLS} />
          </div>
          <div className="min-h-0 flex-1 border-r-2 border-white">
            <Chart />
          </div>
          <div className="h-[9px] shrink-0 border-t-2 border-b border-t-white border-b-black shadow-[inset_0_-1px_#808080]" />
        </section>
      </main>

      <StatusBar />
    </div>
  );
}
